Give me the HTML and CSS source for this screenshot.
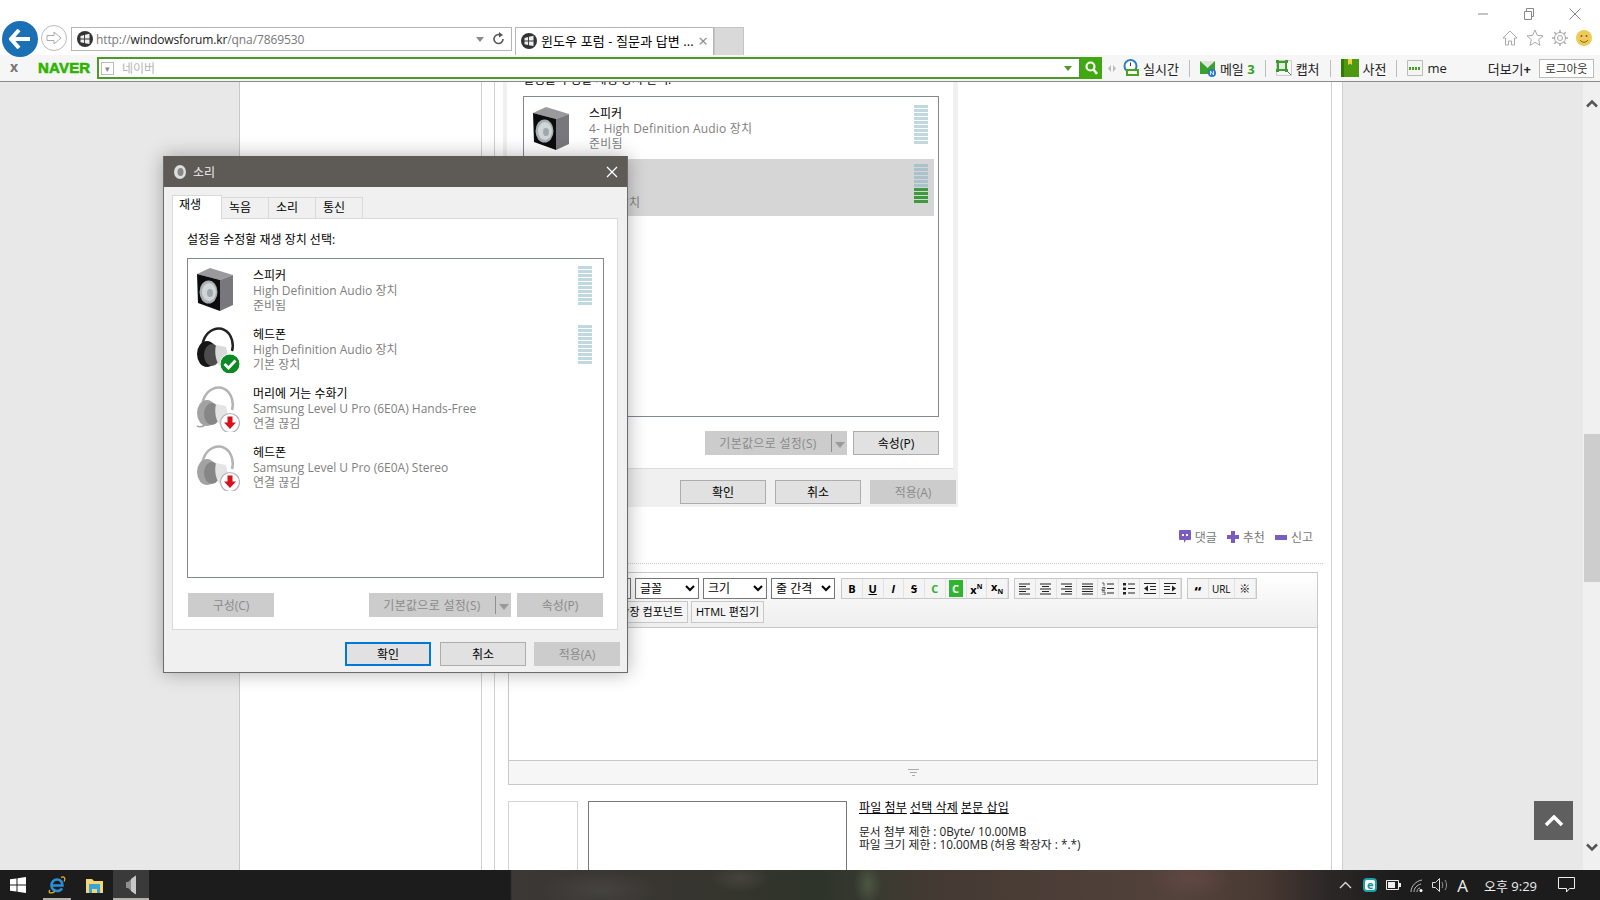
FILE: index.html
```html
<!DOCTYPE html>
<html lang="ko">
<head>
  <meta charset="UTF-8">
  <title>윈도우 포럼 - 질문과 답변</title>
  <link rel="stylesheet" href="styles.css">
</head>
<body>
  <svg class="defs" width="0" height="0">
    <defs>
      <symbol id="fav" viewBox="0 0 16 16">
        <circle cx="8" cy="8" r="8" fill="#333"/>
        <path d="M3.500 5l3.600-1v3.600H3.500zM8 3.800l4.500-1v4.800H8zM3.500 8.500h3.600V12l-3.600-.7zM8 8.500h4.500v4.600L8 12.200z" fill="#eee"/>
      </symbol>
      <symbol id="speaker" viewBox="0 0 36 43">
        <path d="M0 6L13 0l23 7-13 5z" fill="#9a9a9e"/>
        <path d="M23 12l13-5v30l-13 6z" fill="#77777c"/>
        <path d="M0 6l23 6v31L1 35z" fill="#0c0c0c"/>
        <ellipse cx="11.500" cy="24" rx="9" ry="11.500" fill="#a9afb2"/>
        <ellipse cx="12" cy="24" rx="7" ry="9" fill="#d0d5d7"/>
        <ellipse cx="13" cy="25" rx="3" ry="4" fill="#a0a8ac"/>
      </symbol>
      <g id="ph-off">
        <path d="M7 30C2 6 30-4 36 17c1 4 1 8 0 11" fill="none" stroke="#b3b3b3" stroke-width="2.500"/>
        <ellipse cx="11" cy="31" rx="10" ry="13" fill="#a2a2a2"/>
        <ellipse cx="16" cy="32" rx="8" ry="11" fill="#868686"/>
        <path d="M20 22l10 2 3 13-8 7c-5-4-7-14-5-22z" fill="#e4e4e4"/>
        <circle cx="34" cy="41" r="9.500" fill="#fff" stroke="#b5b5b5" stroke-width="1.200"/>
        <path d="M31.500 34.500h5v6h3.500L34 47l-6-6.500h3.500z" fill="#d8121c"/>
      </g>
      <symbol id="phones" viewBox="0 0 44 50">
        <path d="M7 30C2 6 30-4 36 17c1 4 1 8 0 11" fill="none" stroke="#222" stroke-width="2.500"/>
        <ellipse cx="11" cy="31" rx="10" ry="13" fill="#161616"/>
        <ellipse cx="16" cy="32" rx="8" ry="11" fill="#4d4d4d"/>
        <path d="M20 22l10 2 3 13-8 7c-5-4-7-14-5-22z" fill="#d9d9d9"/>
        <circle cx="34" cy="41" r="10" fill="#0b8a24" stroke="#fff" stroke-width="1"/>
        <path d="M28.500 41l4 4 7-7.500" fill="none" stroke="#fff" stroke-width="2.800"/>
      </symbol>
      <symbol id="phones-off" viewBox="0 0 44 50"><use href="#ph-off"/></symbol>
      <symbol id="phones-mic" viewBox="0 0 44 50">
        <use href="#ph-off"/>
        <path d="M9 43c-3 2-6 2-8 1" fill="none" stroke="#a5a5a5" stroke-width="1.600"/>
      </symbol>
      <symbol id="al-left" viewBox="0 0 13 13"><path d="M1 2h11M1 4.500h7M1 7h11M1 9.500h7M1 12h11" stroke="#222"/></symbol>
      <symbol id="al-center" viewBox="0 0 13 13"><path d="M1 2h11M3 4.500h7M1 7h11M3 9.500h7M1 12h11" stroke="#222"/></symbol>
      <symbol id="al-right" viewBox="0 0 13 13"><path d="M1 2h11M5 4.500h7M1 7h11M5 9.500h7M1 12h11" stroke="#222"/></symbol>
      <symbol id="al-full" viewBox="0 0 13 13"><path d="M1 2h11M1 4.500h11M1 7h11M1 9.500h11M1 12h11" stroke="#222"/></symbol>
      <symbol id="li-num" viewBox="0 0 13 13"><path d="M6 2h7M6 6.500h7M6 11h7" stroke="#222"/><path d="M1 1h2v3M1 5.500h3v1.500H1v1.500h3M1 10h3v3H1" fill="none" stroke="#444" stroke-width=".8"/></symbol>
      <symbol id="li-dot" viewBox="0 0 13 13"><path d="M6 2h7M6 6.500h7M6 11h7" stroke="#222"/><path d="M1 1h3v2.500H1zM1 5.500h3V8H1zM1 10h3v2.500H1z" fill="#222"/></symbol>
      <symbol id="in-out" viewBox="0 0 13 13"><path d="M1 1.500h12M7 4.500h6M7 7.500h6M1 11.500h12" stroke="#222"/><path d="M5 3.500v6L1 6.500z" fill="#222"/></symbol>
      <symbol id="in-in" viewBox="0 0 13 13"><path d="M0 1.500h12M0 4.500h6M0 7.500h6M0 11.500h12" stroke="#222"/><path d="M8 3.500v6l4-3z" fill="#222"/></symbol>
    </defs>
  </svg>

  <header class="chrome">
    <div class="nav-row">
      <div class="back-btn">
        <svg width="22" height="20" viewBox="0 0 22 20"><path d="M10 1L2 10l8 9M3 10h18" fill="none" stroke="#fff" stroke-width="4"/></svg>
      </div>
      <div class="fwd-btn">
        <svg width="16" height="14" viewBox="0 0 16 14"><path d="M1 4.500h7V1l7 6-7 6V9.500H1z" fill="#fff" stroke="#aaa"/></svg>
      </div>
      <div class="addr">
        <svg class="fav" width="16" height="16"><use href="#fav"/></svg>
        <span class="url">http://<b>windowsforum.kr</b>/qna/7869530</span>
        <span class="addr-drop"></span>
        <svg class="reload" width="12" height="14" viewBox="0 0 12 14"><path d="M10 7a4.500 4.500 0 1 1-3-4.200" fill="none" stroke="#555" stroke-width="1.600"/><path d="M6 0l4 3-4 2.500z" fill="#555"/></svg>
      </div>
      <div class="tab">
        <svg class="fav" width="16" height="16"><use href="#fav"/></svg>
        <span class="tab-text">윈도우 포럼 - 질문과 답변 ...</span>
        <span class="tab-x">×</span>
      </div>
      <div class="tab-new"></div>
      <div class="nav-right">
        <div class="win-btns">
          <svg width="12" height="12" viewBox="0 0 12 12"><path d="M1 6h10" stroke="#888"/></svg>
          <svg width="12" height="12" viewBox="0 0 12 12"><path d="M1.500 3.500h7v8h-7zM3.500 3.500v-3h7v8h-2" fill="none" stroke="#888"/></svg>
          <svg width="12" height="12" viewBox="0 0 12 12"><path d="M.5.500l11 11M11.500.500l-11 11" stroke="#888"/></svg>
        </div>
        <div class="tool-btns">
          <svg width="16" height="16" viewBox="0 0 16 16"><path d="M1 8l7-7 7 7h-2.500v7h-3v-4h-3v4h-3V8z" fill="none" stroke="#aaa"/></svg>
          <svg width="18" height="17" viewBox="0 0 18 17"><path d="M9 1l2.300 5.400 5.700.500-4.300 3.700 1.300 5.800L9 13.300l-5 3.100 1.300-5.800L1 6.900l5.700-.5z" fill="none" stroke="#aaa"/></svg>
          <svg width="16" height="16" viewBox="0 0 16 16"><circle cx="8" cy="8" r="2.500" fill="none" stroke="#aaa"/><circle cx="8" cy="8" r="5.500" fill="none" stroke="#aaa"/><path d="M8 0v3M8 13v3M0 8h3M13 8h3M2.300 2.300l2 2M11.700 11.700l2 2M2.300 13.700l2-2M11.700 4.300l2-2" stroke="#aaa" stroke-width="1.500"/></svg>
          <svg width="16" height="16" viewBox="0 0 16 16"><circle cx="8" cy="8" r="8" fill="#eec95a"/><circle cx="5.500" cy="6" r="1" fill="#7c6418"/><circle cx="10.500" cy="6" r="1" fill="#7c6418"/><path d="M4 10c2 3 6 3 8 0" fill="none" stroke="#7c6418"/></svg>
        </div>
      </div>
    </div>

    <div class="nv-bar">
      <span class="nv-close">x</span>
      <span class="nv-logo">NAVER</span>
      <div class="nv-search">
        <span class="nv-combo">▾</span>
        <span class="nv-hint">네이버</span>
        <span class="nv-drop"></span>
      </div>
      <div class="nv-go">
        <svg width="13" height="14" viewBox="0 0 13 14"><circle cx="5.500" cy="5.500" r="4" fill="none" stroke="#fff" stroke-width="2.200"/><path d="M8.500 8.500l3.500 4.500" stroke="#fff" stroke-width="2.500"/></svg>
      </div>
      <svg class="nv-grip" width="8" height="9" viewBox="0 0 8 9"><path d="M3 1v7L0 4.500zM5 1v7l3-3.500z" fill="#bbb"/></svg>
      <div class="nv-item">
        <svg width="16" height="18" viewBox="0 0 16 18"><circle cx="7.500" cy="7" r="6" fill="#fff" stroke="#2b7fc4" stroke-width="2"/><path d="M7.500 3.500V7" stroke="#333"/><path d="M4 11h11v5H4z" fill="#fff" stroke="#49a51c" stroke-width="2"/></svg>
        <span>실시간</span>
      </div>
      <i class="nv-sep"></i>
      <div class="nv-item">
        <svg width="16" height="17" viewBox="0 0 16 17"><path d="M0 1h15v13H0z" fill="#3aa12d"/><path d="M0 1l7.500 7L15 1z" fill="#dfe6dc"/><circle cx="12" cy="13" r="4" fill="#2a78c7"/><path d="M10.500 15v-4l3 4v-4" fill="none" stroke="#fff" stroke-width=".8"/></svg>
        <span>메일 <b class="nv-count">3</b></span>
      </div>
      <i class="nv-sep"></i>
      <div class="nv-item">
        <svg width="16" height="16" viewBox="0 0 16 16"><path d="M.5.500h15v15H.5z" fill="#f7f7f7" stroke="#ccc"/><path d="M2 2h8v8H2z" fill="#dfeee0" stroke="#3f9b2d" stroke-width="2"/><path d="M0 0h3v3H0zM9 0h3v3H9zM0 9h3v3H0zM9 9h3v3H9z" fill="#3f9b2d"/><path d="M11 11l4 4" stroke="#666"/></svg>
        <span>캡처</span>
      </div>
      <i class="nv-sep"></i>
      <div class="nv-item">
        <svg width="18" height="18" viewBox="0 0 18 18"><path d="M0 0h18v18H0z" fill="#4d9a12"/><path d="M0 0h3v18H0z" fill="#2f7a08"/><path d="M7 0h4v6L9 4.500 7 6z" fill="#f2d33a"/></svg>
        <span>사전</span>
      </div>
      <i class="nv-sep"></i>
      <div class="nv-item">
        <svg width="16" height="16" viewBox="0 0 16 16"><path d="M.5.500h15v15H.5z" fill="#f4f4f4" stroke="#bbb"/><path d="M2 8.500h12" stroke="#43a020" stroke-width="3" stroke-dasharray="2 1"/></svg>
        <span>me</span>
      </div>
      <span class="nv-more">더보기<b>+</b></span>
      <span class="nv-logout">로그아웃</span>
    </div>
  </header>

  <main class="page">
    <div class="side-gray"></div>
    <div class="side-white"></div>
    <div class="gutter"></div>
    <div class="content">
      <div class="shot">
        <div class="shot-panel">
          <div class="shot-label">설정을 수정할 재생 장치 선택:</div>
          <div class="shot-list">
            <div class="dev-row">
              <svg class="dev-icon" width="36" height="43"><use href="#speaker"/></svg>
              <div class="dev-text">
                <div class="dev-name">스피커</div>
                <div class="dev-sub">4- High Definition Audio 장치</div>
                <div class="dev-sub">준비됨</div>
              </div>
              <div class="meter"></div>
            </div>
            <div class="dev-row selected">
              <div class="dev-text">
                <div class="dev-name">헤드폰</div>
                <div class="dev-sub">&nbsp;</div>
                <div class="dev-sub">기본 장치</div>
              </div>
              <div class="meter active"></div>
            </div>
          </div>
          <div class="btn-row">
            <span class="split off">기본값으로 설정(S)<i class="split-arrow"></i></span>
            <span class="btn">속성(P)</span>
          </div>
        </div>
        <div class="foot-row">
          <span class="btn">확인</span>
          <span class="btn">취소</span>
          <span class="btn off">적용(A)</span>
        </div>
      </div>

      <div class="post-actions">
        <svg width="12" height="14" viewBox="0 0 12 14"><path d="M1 0h10a1 1 0 0 1 1 1v8a1 1 0 0 1-1 1H7l-2 3V10H1a1 1 0 0 1-1-1V1a1 1 0 0 1 1-1z" fill="#7a5cc0"/><path d="M3 4h2v2H3zM7 4h2v2H7z" fill="#fff"/></svg>
        <span>댓글</span>
        <svg class="act-plus" width="12" height="12" viewBox="0 0 12 12"><path d="M4 0h4v4h4v4H8v4H4V8H0V4h4z" fill="#7a5cc0"/></svg>
        <span>추천</span>
        <svg class="act-plus" width="12" height="5" viewBox="0 0 12 5"><path d="M0 0h12v5H0z" fill="#7a5cc0"/></svg>
        <span>신고</span>
      </div>

      <div class="editor">
        <div class="ed-tools">
          <div class="ed-line">
            <select class="ed-select first"><option>문단</option></select>
            <select class="ed-select"><option>글꼴</option></select>
            <select class="ed-select"><option>크기</option></select>
            <select class="ed-select"><option>줄 간격</option></select>
            <div class="ed-group">
              <span class="ed-btn"><b>B</b></span>
              <span class="ed-btn"><b><u>U</u></b></span>
              <span class="ed-btn"><b><i>I</i></b></span>
              <span class="ed-btn"><b><s>S</s></b></span>
              <span class="ed-btn green">C</span>
              <span class="ed-btn"><span class="green-fill">C</span></span>
              <span class="ed-btn"><b>x<sup>N</sup></b></span>
              <span class="ed-btn"><b>x<sub>N</sub></b></span>
            </div>
            <div class="ed-group">
              <span class="ed-btn"><svg width="13" height="13"><use href="#al-left"/></svg></span>
              <span class="ed-btn"><svg width="13" height="13"><use href="#al-center"/></svg></span>
              <span class="ed-btn"><svg width="13" height="13"><use href="#al-right"/></svg></span>
              <span class="ed-btn"><svg width="13" height="13"><use href="#al-full"/></svg></span>
              <span class="ed-btn"><svg width="13" height="13"><use href="#li-num"/></svg></span>
              <span class="ed-btn"><svg width="13" height="13"><use href="#li-dot"/></svg></span>
              <span class="ed-btn"><svg width="13" height="13"><use href="#in-out"/></svg></span>
              <span class="ed-btn"><svg width="13" height="13"><use href="#in-in"/></svg></span>
            </div>
            <div class="ed-group">
              <span class="ed-btn quote"><b>“</b></span>
              <span class="ed-btn wide">URL</span>
              <span class="ed-btn">※</span>
            </div>
          </div>
          <div class="ed-line second">
            <span class="ed-text-btn comp">확장 컴포넌트</span>
            <span class="ed-text-btn">HTML 편집기</span>
          </div>
        </div>
        <div class="ed-body"></div>
        <div class="ed-handle">
          <svg width="11" height="7" viewBox="0 0 11 7"><path d="M0 .5h11M2 3.500h7M4 6.500h3" stroke="#aaa"/></svg>
        </div>
      </div>

      <div class="files">
        <div class="file-thumb"></div>
        <div class="file-list"></div>
        <div class="file-info">
          <div class="file-links"><u>파일 첨부</u> <u>선택 삭제</u> <u>본문 삽입</u></div>
          <div>문서 첨부 제한 : 0Byte/ 10.00MB</div>
          <div>파일 크기 제한 : 10.00MB (허용 확장자 : *.*)</div>
        </div>
      </div>
    </div>
    <div class="side-white narrow"></div>
    <div class="side-gray wide"></div>
    <div class="scrollbar">
      <svg width="12" height="9" viewBox="0 0 12 9"><path d="M1 7.500l5-5 5 5" fill="none" stroke="#555" stroke-width="2.500"/></svg>
      <div class="thumb"></div>
      <svg class="sb-down" width="12" height="9" viewBox="0 0 12 9"><path d="M1 1.500l5 5 5-5" fill="none" stroke="#555" stroke-width="2.500"/></svg>
    </div>
    <div class="to-top">
      <svg width="20" height="12" viewBox="0 0 20 12"><path d="M2 10l8-8 8 8" fill="none" stroke="#fff" stroke-width="3.500"/></svg>
    </div>
  </main>

  <footer class="taskbar">
    <div class="task-start">
      <svg width="16" height="16" viewBox="0 0 16 16"><path d="M0 2.300l6.500-.9v6.100H0zM7.500 1.300L16 0v7.500H7.500zM0 8.500h6.500v6.100L0 13.700zM7.500 8.500H16V16l-8.500-1.300z" fill="#fff"/></svg>
    </div>
    <div class="task-app open">
      <svg width="18" height="18" viewBox="0 0 18 18"><path d="M4 9.500h10.500C14.500 5.500 12 3.500 9 3.500S3.500 6 3.500 9.500 6 15 9 15c2.300 0 4-1 5-2.700" fill="none" stroke="#2b8fd8" stroke-width="2.600"/><path d="M2 14C-.5 17 3 18 7 15.500M13 1.500c3-1.500 5 .5 3 4" fill="none" stroke="#e6b52c" stroke-width="1.200"/></svg>
    </div>
    <div class="task-app">
      <svg width="17" height="15" viewBox="0 0 17 15"><path d="M0 1h6l2 2h9v12H0z" fill="#f4d774"/><path d="M3 6h11v9h-3v-4H6v4H3z" fill="#3da2d8"/></svg>
    </div>
    <div class="task-app active open">
      <svg width="10" height="20" viewBox="0 0 10 20"><path d="M0 7h2l7-6v18l-7-6H0z" fill="#8f8f8f"/><path d="M5 4l5-3.500v19L5 16z" fill="#c8c8c8"/></svg>
    </div>
    <div class="tray">
      <svg class="tray-up" width="13" height="8" viewBox="0 0 13 8"><path d="M1 7l5.500-5.500L12 7" fill="none" stroke="#ddd" stroke-width="1.300"/></svg>
      <span class="tray-eset">e</span>
      <svg width="15" height="10" viewBox="0 0 15 10"><path d="M.5.500h12v9H.5z" fill="none" stroke="#eee"/><path d="M2 2h7v6H2z" fill="#eee"/><path d="M13 3h2v4h-2z" fill="#eee"/></svg>
      <svg width="13" height="13" viewBox="0 0 13 13"><path d="M1 13C1 7 6 2 12 1M4 13c0-4 3-7 7-8M7 13c0-2 1-4 3-4" fill="none" stroke="#bbb"/><circle cx="11" cy="11.500" r="1.500" fill="#fff"/></svg>
      <svg width="16" height="14" viewBox="0 0 16 14"><path d="M.5 4.500h3L7.500.5v13l-4-4h-3z" fill="none" stroke="#ddd"/><path d="M10 4c1 2 1 4 0 6M13 2c2 3 2 7 0 10" fill="none" stroke="#999"/></svg>
      <span class="tray-ime">A</span>
      <span class="tray-clock">오후 9:29</span>
      <svg class="tray-note" width="17" height="16" viewBox="0 0 17 16"><path d="M.5.500h16v11h-5L8.500 15v-3.500h-8z" fill="none" stroke="#eee"/></svg>
    </div>
  </footer>

  <section class="dialog">
    <div class="dlg-title">
      <svg width="12" height="14" viewBox="0 0 12 14"><ellipse cx="6" cy="7" rx="6" ry="7" fill="#ddd"/><ellipse cx="6.500" cy="7" rx="3" ry="4" fill="#888"/></svg>
      <span>소리</span>
      <svg class="dlg-x" width="12" height="12" viewBox="0 0 12 12"><path d="M1 1l10 10M11 1L1 11" stroke="#fff" stroke-width="1.300"/></svg>
    </div>
    <div class="dlg-tabs">
      <span class="dlg-tab on">재생</span>
      <span class="dlg-tab">녹음</span>
      <span class="dlg-tab">소리</span>
      <span class="dlg-tab">통신</span>
    </div>
    <div class="dlg-panel">
      <div class="dlg-label">설정을 수정할 재생 장치 선택:</div>
      <div class="dlg-list">
        <div class="dev-row">
          <svg class="dev-icon" width="36" height="43"><use href="#speaker"/></svg>
          <div class="dev-text">
            <div class="dev-name">스피커</div>
            <div class="dev-sub">High Definition Audio 장치</div>
            <div class="dev-sub">준비됨</div>
          </div>
          <div class="meter"></div>
        </div>
        <div class="dev-row">
          <svg class="dev-icon big" width="44" height="50"><use href="#phones"/></svg>
          <div class="dev-text">
            <div class="dev-name">헤드폰</div>
            <div class="dev-sub">High Definition Audio 장치</div>
            <div class="dev-sub">기본 장치</div>
          </div>
          <div class="meter"></div>
        </div>
        <div class="dev-row">
          <svg class="dev-icon big" width="44" height="50"><use href="#phones-mic"/></svg>
          <div class="dev-text">
            <div class="dev-name">머리에 거는 수화기</div>
            <div class="dev-sub">Samsung Level U Pro (6E0A) Hands-Free</div>
            <div class="dev-sub">연결 끊김</div>
          </div>
        </div>
        <div class="dev-row">
          <svg class="dev-icon big" width="44" height="50"><use href="#phones-off"/></svg>
          <div class="dev-text">
            <div class="dev-name">헤드폰</div>
            <div class="dev-sub">Samsung Level U Pro (6E0A) Stereo</div>
            <div class="dev-sub">연결 끊김</div>
          </div>
        </div>
      </div>
      <div class="btn-row apart">
        <span class="btn off">구성(C)</span>
        <span class="split off push">기본값으로 설정(S)<i class="split-arrow"></i></span>
        <span class="btn off">속성(P)</span>
      </div>
    </div>
    <div class="foot-row dlg-foot">
      <span class="btn default">확인</span>
      <span class="btn">취소</span>
      <span class="btn off">적용(A)</span>
    </div>
  </section>
</body>
</html>
```

FILE: styles.css
```css
* {
  box-sizing: border-box;
}

html, body {
  margin: 0;
  height: 100%;
}

body {
  width: 1600px;
  height: 900px;
  display: flex;
  flex-direction: column;
  position: relative;
  overflow: hidden;
  background: #fff;
  font-family: "Open Sans", "Noto Sans CJK KR", sans-serif;
  font-size: 12px;
  color: #000;
}

.defs {
  position: absolute;
}

/* browser top */
.chrome {
  flex: none;
  height: 82px;
  border-bottom: 1px solid #8a8a8a;
  background: #fff;
}

.nav-row {
  height: 55px;
  display: flex;
  align-items: flex-end;
  padding-left: 2px;
}

.back-btn {
  width: 36px;
  height: 36px;
  margin-bottom: -2px;
  border-radius: 50%;
  background: #1a6fb5;
  display: flex;
  align-items: center;
  justify-content: center;
  flex: none;
}

.fwd-btn {
  width: 26px;
  height: 26px;
  margin: 0 4px 4px 3px;
  border: 1px solid #bbb;
  border-radius: 50%;
  display: flex;
  align-items: center;
  justify-content: center;
  flex: none;
}

.addr {
  width: 441px;
  height: 24px;
  margin-bottom: 4px;
  padding: 0 6px 0 5px;
  border: 1px solid #b5b5b5;
  display: flex;
  align-items: center;
  flex: none;
}

.url {
  margin-left: 3px;
  color: #777;
  font-size: 12px;
  letter-spacing: -.1px;
}

.url b {
  font-weight: 400;
  color: #222;
}

.addr-drop {
  margin-left: auto;
  margin-right: 9px;
  border-left: 4px solid transparent;
  border-right: 4px solid transparent;
  border-top: 5px solid #888;
}

.tab {
  width: 199px;
  height: 28px;
  margin-left: 3px;
  padding: 0 5px 2px 5px;
  border: 1px solid #b5b5b5;
  border-bottom: 0;
  display: flex;
  align-items: center;
  flex: none;
}

.tab-text {
  margin-left: 4px;
  font-size: 13px;
  letter-spacing: .1px;
  white-space: nowrap;
}

.tab-x {
  margin-left: auto;
  color: #888;
  font-size: 17px;
  line-height: 1;
}

.tab-new {
  width: 30px;
  height: 28px;
  background: #d9d9d9;
  border: 1px solid #c4c4c4;
  border-bottom: 0;
  flex: none;
}

.nav-right {
  margin-left: auto;
  align-self: stretch;
  display: flex;
  flex-direction: column;
}

.win-btns {
  height: 29px;
  padding: 8px 19px 0 0;
  display: flex;
  justify-content: flex-end;
  gap: 34px;
}

.tool-btns {
  display: flex;
  align-items: center;
  gap: 8px;
  padding-right: 8px;
  justify-content: flex-end;
}

/* naver toolbar */
.nv-bar {
  height: 26px;
  background: #f6f6f6;
  display: flex;
  align-items: center;
  white-space: nowrap;
}

.nv-close {
  width: 38px;
  padding-left: 10px;
  padding-bottom: 3px;
  color: #777;
  font-size: 14px;
  font-weight: 700;
}

.nv-logo {
  width: 59px;
  padding-bottom: 1px;
  color: #2db400;
  font-family: "Liberation Sans", sans-serif;
  font-size: 15px;
  font-weight: 700;
  -webkit-text-stroke: .6px #2db400;
  letter-spacing: .2px;
}

.nv-search {
  width: 984px;
  height: 22px;
  background: #fff;
  border: 2px solid #4d9a2a;
  display: flex;
  align-items: center;
  padding-left: 2px;
}

.nv-combo {
  width: 13px;
  height: 13px;
  border: 1px solid #bbb;
  color: #888;
  font-size: 9px;
  line-height: 11px;
  text-align: center;
}

.nv-hint {
  margin-left: 8px;
  color: #b5b5b5;
}

.nv-drop {
  margin-left: auto;
  margin-right: 7px;
  border-left: 4px solid transparent;
  border-right: 4px solid transparent;
  border-top: 5px solid #4d9a2a;
}

.nv-go {
  width: 21px;
  height: 22px;
  background: #3fa90f;
  display: flex;
  align-items: center;
  justify-content: center;
}

.nv-grip {
  margin: 0 7px 0 6px;
}

.nv-item {
  display: flex;
  align-items: center;
  gap: 4px;
  font-size: 13px;
  color: #222;
}

.nv-count {
  color: #2fa51a;
}

.nv-sep {
  width: 1px;
  height: 17px;
  margin: 0 10px;
  background: #bdbdbd;
}

.nv-more {
  margin-left: auto;
  margin-right: 8px;
  font-size: 13px;
  color: #222;
}

.nv-logout {
  width: 55px;
  height: 19px;
  margin-right: 6px;
  border: 1px solid #bbb;
  background: #fff;
  line-height: 17px;
  text-align: center;
  color: #333;
  font-size: 11.500px;
}

/* page columns */
.page {
  flex: 1;
  min-height: 0;
  display: flex;
  position: relative;
  overflow: hidden;
}

.side-gray {
  width: 240px;
  flex: none;
  background: #e8e8e8;
  border-right: 1px solid #c8c8c8;
}

.side-white {
  width: 242px;
  flex: none;
  background: #fff;
  border-right: 1px solid #d0d0d0;
}

.side-white.narrow {
  width: 12px;
  border-right: 1px solid #d0d0d0;
  border-left: 1px solid #d0d0d0;
}

.side-gray.wide {
  width: 240px;
  border: 0;
}

.gutter {
  width: 13px;
  flex: none;
  border-right: 1px solid #d0d0d0;
}

.content {
  width: 836px;
  flex: none;
  padding-left: 8px;
}

/* pasted picture of the dialog */
.shot {
  width: 455px;
  height: 425px;
  background: #f0f0f0;
  padding: 0 5px 0 4px;
}

.shot-panel {
  display: flow-root;
  height: 387px;
  background: #fff;
  border-bottom: 1px solid #dcdcdc;
  padding: 0 14px 0 16px;
}

.shot-label {
  height: 14px;
  margin-top: -9px;
  font-size: 12px;
  line-height: 14px;
}

.shot-list {
  height: 321px;
  margin-top: 9px;
  border: 1px solid #828790;
  padding: 3px 4px 0 0;
}

.shot .dev-icon {
  margin-top: 7px;
}

.shot .dev-text {
  padding-top: 6px;
}

.shot .dev-sub {
  letter-spacing: .18px;
}

.shot .meter {
  margin: 5px 6px 0 auto;
}

.shot .btn-row {
  margin-top: 14px;
  justify-content: flex-end;
}

.shot .foot-row {
  margin-top: 11px;
  justify-content: flex-end;
  margin-right: -3px;
}

.dev-row {
  height: 59px;
  display: flex;
  padding-left: 9px;
  position: relative;
}

.dev-row.selected {
  height: 57px;
  background: #d6d6d6;
}

.dev-icon {
  flex: none;
  margin-top: 5px;
}

.dev-icon.big {
  margin: 1px 0 0 -1px;
  width: 44px;
  height: 50px;
}

.dev-text {
  margin-left: 20px;
  padding-top: 5px;
  line-height: 15px;
  white-space: nowrap;
}

.dev-icon.big + .dev-text {
  margin-left: 13px;
}

.shot .selected .dev-text {
  margin-left: 59px;
}

.dev-name {
  color: #000;
}

.dev-sub {
  color: #7f7f7f;
}

.meter {
  width: 14px;
  height: 39px;
  margin: 3px 1px 0 auto;
  background: repeating-linear-gradient(#c0d8e0 0 3px, #fff 3px 4px);
}

.meter.active {
  background: linear-gradient(transparent 23px, #3d9b3d 23px),
    repeating-linear-gradient(#a9c2cc 0 3px, #d6d6d6 3px 4px);
  position: relative;
}

.meter.active::after {
  content: "";
  position: absolute;
  inset: 0;
  background: repeating-linear-gradient(transparent 0 3px, #d6d6d6 3px 4px);
}

.btn-row {
  display: flex;
  gap: 6px;
}

.btn-row.apart {
  width: 416px;
  margin-top: 15px;
  padding-left: 1px;
}

.push {
  margin-left: auto;
}

.foot-row {
  display: flex;
  gap: 9px;
}

.btn, .split {
  width: 86px;
  height: 24px;
  background: #e1e1e1;
  border: 1px solid #adadad;
  display: flex;
  align-items: center;
  justify-content: center;
  flex: none;
  white-space: nowrap;
}

.split {
  width: 142px;
  padding-right: 16px;
  letter-spacing: .3px;
  position: relative;
}

.off {
  background: #ccc;
  border-color: #ccc;
  color: #8a8a8a;
}

.btn.default {
  margin-right: 1px;
  border: 2px solid #0078d7;
}

.split-arrow {
  position: absolute;
  right: 0;
  top: 2px;
  bottom: 2px;
  width: 15px;
  border-left: 1px solid #8f8f8f;
}

.split-arrow::after {
  content: "";
  position: absolute;
  left: 3px;
  top: 8px;
  border-left: 5px solid transparent;
  border-right: 5px solid transparent;
  border-top: 6px solid #999;
}

/* below the picture */
.post-actions {
  height: 20px;
  margin: 20px 18px 0 0;
  display: flex;
  justify-content: flex-end;
  align-items: center;
  gap: 4px;
  color: #777;
}

.act-plus {
  margin-left: 6px;
}

.editor {
  width: 810px;
  margin: 25px 0 0 5px;
  border: 1px solid #c8c8c8;
  position: relative;
}

.editor::before {
  content: "";
  position: absolute;
  left: 0;
  top: -10px;
  width: 814px;
  border-top: 1px dotted #ccc;
}

.ed-tools {
  height: 55px;
  padding-top: 5px;
  background: linear-gradient(#fff, #eeeeee);
  border-bottom: 1px solid #c8c8c8;
}

.ed-line {
  display: flex;
  align-items: center;
  gap: 4px;
  padding-left: 12px;
  height: 21px;
}

.ed-line.second {
  height: 22px;
  margin-top: 2px;
  padding-left: 79px;
  gap: 3px;
}

.ed-select {
  width: 64px;
  height: 21px;
  padding: 0;
  font: 12px "Open Sans", "Noto Sans CJK KR", sans-serif;
  background: #fff;
  border: 1px solid #767676;
  flex: none;
}

.ed-select.first {
  width: 110px;
}

.ed-group {
  display: flex;
  margin-left: 2px;
  border: 1px solid #c8c8c8;
  height: 21px;
}

.ed-group + .ed-group {
  margin-left: 1px;
}

.ed-btn {
  width: 20.750px;
  display: flex;
  align-items: center;
  justify-content: center;
  border-right: 1px solid #e2e2e2;
  background: #f4f4f4;
  font-size: 11px;
  line-height: 1;
}

.ed-btn.wide {
  width: 26px;
  font-size: 10px;
}

.ed-btn.quote {
  font-size: 15px;
  padding-top: 5px;
}

.ed-btn sup, .ed-btn sub {
  font-size: 7px;
}

.green {
  color: #2fb02f;
  font-weight: 700;
}

.green-fill {
  width: 14px;
  height: 17px;
  background: #2fb52f;
  color: #fff;
  font-weight: 700;
  text-align: center;
  line-height: 17px;
}

.ed-text-btn {
  height: 22px;
  padding: 0 4px;
  border: 1px solid #c8c8c8;
  background: #f4f4f4;
  line-height: 20px;
  font-size: 11px;
  white-space: nowrap;
}

.ed-text-btn.comp {
  width: 100px;
  text-align: right;
}

.ed-body {
  height: 132px;
  background: #fff;
}

.ed-handle {
  height: 24px;
  background: #f6f6f6;
  border-top: 1px solid #c8c8c8;
  display: flex;
  align-items: center;
  justify-content: center;
}

.files {
  display: flex;
  margin: 16px 0 0 5px;
}

.file-thumb {
  width: 70px;
  height: 90px;
  border: 1px solid #d4d4d4;
}

.file-list {
  width: 259px;
  height: 90px;
  margin-left: 10px;
  border: 1px solid #777;
}

.file-info {
  margin-left: 12px;
  font-size: 11.800px;
  line-height: 13px;
  color: #222;
}

.file-links {
  margin-bottom: 10px;
  font-size: 12px;
  line-height: 14px;
  letter-spacing: .1px;
  color: #000;
}

.scrollbar {
  width: 17px;
  flex: none;
  background: #f0f0f0;
  display: flex;
  flex-direction: column;
  align-items: center;
  padding: 17px 0 18px;
}

.thumb {
  width: 16px;
  height: 148px;
  margin-top: 326px;
  background: #cdcdcd;
}

.sb-down {
  margin-top: auto;
}

.to-top {
  position: absolute;
  left: 1534px;
  top: 719px;
  width: 39px;
  height: 39px;
  background: #5f5f5f;
  display: flex;
  align-items: center;
  justify-content: center;
}

/* windows taskbar */
.taskbar {
  flex: none;
  height: 30px;
  display: flex;
  align-items: center;
  background:
    radial-gradient(ellipse 14px 22px at 868px 14px, #4c5644, transparent),
    radial-gradient(ellipse 30px 14px at 740px 8px, #46443c, transparent),
    radial-gradient(ellipse 40px 20px at 1190px 8px, #604843, transparent),
    radial-gradient(ellipse 60px 20px at 600px 20px, #454340, transparent),
    linear-gradient(90deg, #1c1c1c 0, #1c1c1c 510px, #3b3835 512px, #37352f 700px, #2e342a 820px, #3a3a30 880px, #443a33 940px, #54423c 1180px, #4a3a34 1260px, #2b2726 1330px, #1c1c1c 1400px);
}

.task-start {
  width: 36px;
  height: 30px;
  display: flex;
  align-items: center;
  justify-content: center;
}

.task-app {
  width: 36px;
  height: 30px;
  display: flex;
  align-items: center;
  justify-content: center;
  margin-left: 1px;
  position: relative;
}

.task-start + .task-app {
  margin-left: 3px;
}

.task-app.active {
  background: #3a3a3a;
}

.task-app.open::after {
  content: "";
  position: absolute;
  left: 4px;
  right: 4px;
  bottom: 0;
  height: 2px;
  background: #b4b0ac;
}

.task-app.active::after {
  left: 0;
  right: 0;
}

.tray {
  margin-left: auto;
  height: 30px;
  display: flex;
  align-items: center;
  color: #eee;
  gap: 9px;
  padding-right: 25px;
}

.tray-up {
  margin-right: 2px;
}

.tray-eset {
  width: 14px;
  height: 14px;
  border-radius: 4px;
  background: #fff;
  border: 2px solid #1ba3a8;
  color: #1390a0;
  font-size: 11px;
  font-weight: 700;
  line-height: 10px;
  text-align: center;
}

.tray-ime {
  margin-right: 2px;
  font-size: 17px;
  font-weight: 400;
}

.tray-clock {
  margin-left: 5px;
  width: 57px;
  font-size: 13px;
  white-space: nowrap;
}

.tray-note {
  margin-left: 8px;
}

/* sound dialog, floats over the page */
.dialog {
  position: absolute;
  left: 163px;
  top: 156px;
  width: 465px;
  height: 517px;
  background: #f0f0f0;
  border: 1px solid #6b6b6b;
  border-top: 0;
  box-shadow: 0 0 18px rgba(0, 0, 0, .3);
}

.dlg-title {
  height: 31px;
  background: #5e5a56;
  color: #eee;
  display: flex;
  align-items: center;
  padding-left: 10px;
  gap: 7px;
}

.dlg-x {
  margin-left: auto;
  margin-right: 9px;
}

.dlg-tabs {
  height: 31px;
  padding: 8px 0 0 8px;
  display: flex;
  align-items: flex-end;
}

.dlg-tab {
  width: 47px;
  height: 21px;
  padding-left: 7px;
  background: #f0f0f0;
  border: 1px solid #d9d9d9;
  border-left: 0;
  border-bottom: 0;
  line-height: 20px;
}

.dlg-tab.on {
  width: 50px;
  height: 24px;
  margin-bottom: -1px;
  padding-left: 6px;
  background: #fff;
  border-left: 1px solid #d9d9d9;
  line-height: 18px;
  position: relative;
}

.dlg-panel {
  width: 446px;
  height: 412px;
  margin-left: 8px;
  background: #fff;
  border: 1px solid #d9d9d9;
  padding: 12px 0 0 14px;
}

.dlg-label {
  height: 17px;
  line-height: 17px;
}

.dlg-list {
  width: 417px;
  height: 320px;
  margin-top: 10px;
  border: 1px solid #828790;
  padding: 4px 10px 0 0;
}

.dlg-foot {
  margin-top: 12px;
  justify-content: flex-end;
  padding-right: 7px;
  gap: 8px;
}
```
